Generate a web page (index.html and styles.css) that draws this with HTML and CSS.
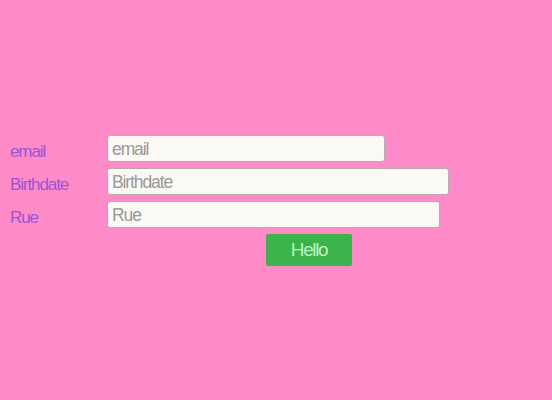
FILE: index.html
```html
<!DOCTYPE html>
<html>
<head>
<meta charset="utf-8">
<link rel="stylesheet" href="styles.css">
</head>
<body>
<form class="form">
  <div class="row">
    <label class="label">email</label>
    <input class="field w1" type="text" placeholder="email">
  </div>
  <div class="row">
    <label class="label">Birthdate</label>
    <input class="field w2" type="text" placeholder="Birthdate">
  </div>
  <div class="row">
    <label class="label">Rue</label>
    <input class="field w3" type="text" placeholder="Rue">
  </div>
  <div class="actions">
    <button class="btn" type="button">Hello</button>
  </div>
</form>
</body>
</html>
```
FILE: styles.css
```css
html, body {
  margin: 0;
  padding: 0;
  background: #ff8ac8;
  height: 100%;
}
body {
  font-family: "Liberation Sans", Arial, sans-serif;
}
.form {
  padding: 135px 0 0 10px;
  display: flex;
  flex-direction: column;
  gap: 6px;
}
.row {
  display: flex;
  align-items: center;
}
.label {
  width: 97px;
  padding-top: 7px;
  color: #9a55d4;
  font-size: 17px;
  letter-spacing: -1.1px;
}
.field {
  box-sizing: border-box;
  height: 27px;
  margin: 0;
  padding: 2px 4px 0;
  border: 1px solid #b9a9b0;
  border-radius: 3px;
  background: #fbf9f4;
  font-family: "Liberation Sans", Arial, sans-serif;
  font-size: 17.5px;
  letter-spacing: -1.1px;
  color: #555;
}
.field::placeholder {
  color: #9a9a9a;
}
.w1 { width: 278px; }
.w2 { width: 342px; }
.w3 { width: 333px; }
.actions {
  padding-left: 256px;
}
.btn {
  width: 86px;
  height: 32px;
  border: none;
  border-radius: 2px;
  background: #3cb34a;
  color: #b8f5c0;
  font-family: "Liberation Sans", Arial, sans-serif;
  font-size: 19px;
  letter-spacing: -1.4px;
}
```
